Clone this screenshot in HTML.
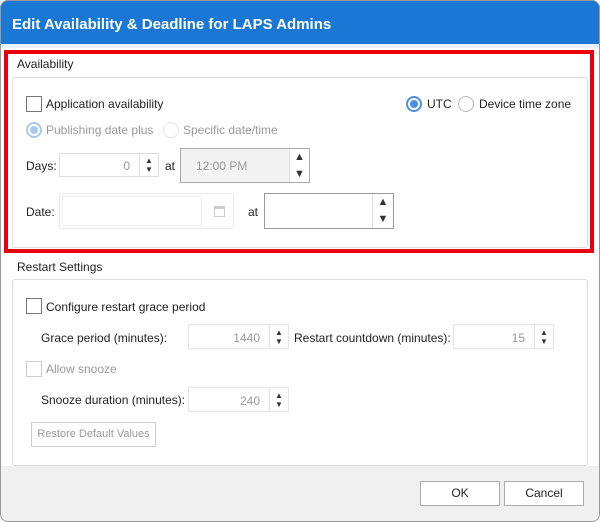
<!DOCTYPE html>
<html><head><meta charset="utf-8"><style>
*{box-sizing:border-box;margin:0;padding:0}
body{width:600px;height:522px;background:#fff;font-family:"Liberation Sans",sans-serif;font-size:12px;color:#222;position:relative;overflow:hidden}
.a{position:absolute}
.t{position:absolute;white-space:nowrap;line-height:14px}
.cb{position:absolute;width:16px;height:16px;border:1px solid #777;background:#fff}
.rd{position:absolute;width:16px;height:16px;border:1px solid #bbb;border-radius:50%;background:#fff}
.rd.on{border:2px solid #4a90e2}
.rd.on::after{content:"";position:absolute;left:2px;top:2px;width:8px;height:8px;border-radius:50%;background:#4a90e2}
.rd.dis.on{border-color:#a9c8ee}.rd.dis.on::after{background:#a9c8ee}
.box{position:absolute;border:1px solid #ccc;background:#fff}
.sp{position:absolute;top:0;bottom:0;right:0;border-left:1px solid #e0e0e0;font-size:8px;color:#333;display:flex;flex-direction:column;align-items:center;justify-content:center;line-height:9px}
.gray{color:#999}
.btn{position:absolute;border:1px solid #adadad;background:#fff;text-align:center;line-height:23px}
</style></head><body>
<div class="a" style="left:0;top:0;width:600px;height:44px;background:#1a78d4;border-radius:8px 8px 0 0"></div>
<div class="t" style="left:12px;top:16px;color:#fff;font-size:15px;font-weight:bold;line-height:18px">Edit Availability &amp; Deadline for LAPS Admins</div>
<div class="a" style="left:1px;top:44px;width:598px;height:4px;background:#e8f1fb"></div>

<div class="a" style="left:4px;top:50px;width:590px;height:203px;border:4px solid #e8000b"></div>
<div class="t" style="left:17px;top:57px">Availability</div>
<div class="a" style="left:12px;top:77px;width:576px;height:171px;border:1px solid #ddd;border-radius:3px"></div>
<div class="cb" style="left:26px;top:96px"></div>
<div class="t" style="left:46px;top:97px">Application availability</div>
<div class="rd on" style="left:406px;top:96px"></div>
<div class="t" style="left:427px;top:97px">UTC</div>
<div class="rd" style="left:458px;top:96px"></div>
<div class="t" style="left:479px;top:97px">Device time zone</div>
<div class="rd dis on" style="left:26px;top:122px"></div>
<div class="t gray" style="left:46px;top:123px">Publishing date plus</div>
<div class="rd" style="left:163px;top:122px;border-color:#e2e2e2"></div>
<div class="t gray" style="left:183px;top:123px">Specific date/time</div>

<div class="t" style="left:26px;top:159px">Days:</div>
<div class="box" style="left:59px;top:153px;width:100px;height:24px;border-color:#ddd"><span class="t gray" style="right:28px;top:5px">0</span><div class="sp" style="width:19px">▲<br>▼</div></div>
<div class="t" style="left:165px;top:159px">at</div>
<div class="box" style="left:180px;top:148px;width:130px;height:35px;border-color:#aaa;background:#f3f3f3"><span class="t gray" style="left:15px;top:10px">12:00 PM</span><div class="sp" style="width:20px;background:#fff;font-size:11px;line-height:17px">▲<br>▼</div></div>

<div class="t" style="left:26px;top:205px">Date:</div>
<div class="box" style="left:59px;top:193px;width:175px;height:36px;border-color:#e8e8e8;border-radius:3px"><div class="a" style="left:2px;top:2px;width:140px;height:30px;border:1px solid #f0f0f0"></div><div class="a" style="left:154px;top:12px;width:11px;height:11px;border:1px solid #ccc;border-top-width:3px"></div></div>
<div class="t" style="left:248px;top:205px">at</div>
<div class="box" style="left:264px;top:193px;width:130px;height:36px;border-color:#999"><div class="sp" style="width:21px;font-size:11px;line-height:17px">▲<br>▼</div></div>

<div class="t" style="left:17px;top:260px">Restart Settings</div>
<div class="a" style="left:12px;top:279px;width:576px;height:187px;border:1px solid #ddd;border-radius:3px"></div>
<div class="cb" style="left:26px;top:298px"></div>
<div class="t" style="left:46px;top:300px">Configure restart grace period</div>
<div class="t" style="left:41px;top:331px">Grace period (minutes):</div>
<div class="box" style="left:188px;top:324px;width:101px;height:25px;border-color:#e4e4e4"><span class="t gray" style="right:28px;top:6px">1440</span><div class="sp" style="width:19px">▲<br>▼</div></div>
<div class="t" style="left:294px;top:331px">Restart countdown (minutes):</div>
<div class="box" style="left:453px;top:324px;width:101px;height:25px;border-color:#e4e4e4"><span class="t gray" style="right:28px;top:6px">15</span><div class="sp" style="width:19px">▲<br>▼</div></div>
<div class="cb" style="left:26px;top:361px;border-color:#ccc"></div>
<div class="t gray" style="left:46px;top:362px">Allow snooze</div>
<div class="t" style="left:41px;top:393px">Snooze duration (minutes):</div>
<div class="box" style="left:188px;top:387px;width:101px;height:25px;border-color:#e4e4e4"><span class="t gray" style="right:28px;top:6px">240</span><div class="sp" style="width:19px">▲<br>▼</div></div>
<div class="btn gray" style="left:31px;top:422px;width:125px;height:25px;border-color:#ccc;font-size:11px">Restore Default Values</div>

<div class="a" style="left:1px;top:466px;width:598px;height:55px;background:#f0f0f0;border-radius:0 0 8px 8px"></div>
<div class="btn" style="left:420px;top:481px;width:80px;height:25px">OK</div>
<div class="btn" style="left:504px;top:481px;width:80px;height:25px">Cancel</div>
<div class="a" style="left:0;top:0;width:600px;height:522px;border:1px solid #9a9a9a;border-radius:8px;"></div>
</body></html>
